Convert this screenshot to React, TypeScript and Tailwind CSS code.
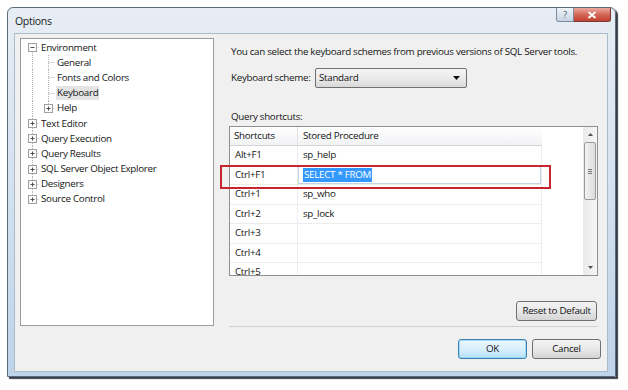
import React from 'react';

type Glyph = 'plus' | 'minus' | 'none';

function Connector({ glyph, top, bottom }: { glyph: Glyph; top: boolean; bottom: boolean }) {
  return (
    <svg width="18" height="15" className="shrink-0">
      <line x1="11.5" y1={top ? 0 : 7.5} x2="11.5" y2={bottom ? 15 : 7.5} stroke="#b4b4b4" strokeDasharray="1 1" />
      <line x1="11.5" y1="7.5" x2="18" y2="7.5" stroke="#b4b4b4" strokeDasharray="1 1" />
      {glyph !== 'none' && (
        <g>
          <rect x="7.5" y="3.5" width="8" height="8" fill="#fbfbfb" stroke="#a0a0a0" />
          <line x1="9.5" y1="7.5" x2="13.5" y2="7.5" stroke="#505050" />
          {glyph === 'plus' && <line x1="11.5" y1="5.5" x2="11.5" y2="9.5" stroke="#505050" />}
        </g>
      )}
    </svg>
  );
}

function Pass() {
  return (
    <svg width="16" height="15" className="shrink-0">
      <line x1="11.5" y1="0" x2="11.5" y2="15" stroke="#b4b4b4" strokeDasharray="1 1" />
    </svg>
  );
}

const tree = [
  { label: 'Environment', level: 0, glyph: 'minus' as Glyph, top: false, bottom: true },
  { label: 'General', level: 1, glyph: 'none' as Glyph, top: true, bottom: true },
  { label: 'Fonts and Colors', level: 1, glyph: 'none' as Glyph, top: true, bottom: true },
  { label: 'Keyboard', level: 1, glyph: 'none' as Glyph, top: true, bottom: true, selected: true },
  { label: 'Help', level: 1, glyph: 'plus' as Glyph, top: true, bottom: false },
  { label: 'Text Editor', level: 0, glyph: 'plus' as Glyph, top: true, bottom: true },
  { label: 'Query Execution', level: 0, glyph: 'plus' as Glyph, top: true, bottom: true },
  { label: 'Query Results', level: 0, glyph: 'plus' as Glyph, top: true, bottom: true },
  { label: 'SQL Server Object Explorer', level: 0, glyph: 'plus' as Glyph, top: true, bottom: true },
  { label: 'Designers', level: 0, glyph: 'plus' as Glyph, top: true, bottom: true },
  { label: 'Source Control', level: 0, glyph: 'plus' as Glyph, top: true, bottom: false },
];

const shortcuts = [
  { key: 'Alt+F1', proc: 'sp_help' },
  { key: 'Ctrl+F1', proc: 'SELECT * FROM', editing: true },
  { key: 'Ctrl+1', proc: 'sp_who' },
  { key: 'Ctrl+2', proc: 'sp_lock' },
  { key: 'Ctrl+3', proc: '' },
  { key: 'Ctrl+4', proc: '' },
  { key: 'Ctrl+5', proc: '' },
];

const vistaButton =
  'h-[20px] rounded-[3px] border border-[#707070] bg-gradient-to-b from-[#f3f3f3] via-[#e8e8e8] to-[#d4d4d4] flex items-center justify-center text-[#111]';

export default function App() {
  return (
    <div className="relative w-[628px] h-[390px] bg-white pt-[7px] pl-[7px] font-['Open_Sans',sans-serif] text-[9.8px] leading-[14px] text-[#151515] tracking-[-0.3px]">
      <div className="w-[609px] h-[370px] rounded-t-[6px] border border-[#5d6b7b] bg-gradient-to-b from-[#e7edf4] via-[#d3e1ef] to-[#bed4ea] flex flex-col shadow-[2px_2px_1px_rgba(20,30,40,0.85)]">
        {/* title bar */}
        <div className="h-[25px] flex items-start shrink-0">
          <span className="pl-[7px] pt-[6px] text-[10.5px] text-[#1b1b1b]">Options</span>
          <div className="ml-auto mr-[4px] flex">
            <div className="w-[18px] h-[14px] rounded-bl-[3px] border border-t-0 border-[#7b8b9c] bg-gradient-to-b from-[#eef3f8] to-[#c9d6e3] flex items-center justify-center text-[9px] leading-none text-[#4a5a6a]">
              ?
            </div>
            <div className="w-[37px] h-[14px] rounded-br-[3px] border border-t-0 border-l-0 border-[#7a3a35] bg-gradient-to-b from-[#e9a89c] via-[#d4685a] to-[#c2402f] flex items-center justify-center">
              <svg width="10" height="8" viewBox="0 0 10 8">
                <path d="M1.5 1 L8.5 7 M8.5 1 L1.5 7" stroke="#ffffff" strokeWidth="1.8" />
              </svg>
            </div>
          </div>
        </div>

        {/* client area */}
        <div className="ml-[6px] mr-[7px] mb-[4px] flex-1 bg-[#f0f0f0] border border-[#a9bacb] flex flex-col">
          <div className="flex pt-[4px] pl-[5px]">
            {/* tree */}
            <div className="w-[194px] h-[288px] bg-white border border-[#9b9b9b] pt-[1px]">
              {tree.map((t, i) => (
                <div key={i} className="flex items-center h-[15.2px]">
                  {t.level === 1 && <Pass />}
                  <Connector glyph={t.glyph} top={t.top} bottom={t.bottom} />
                  <span className={`ml-[1px] px-[1px] leading-[14px] whitespace-nowrap ${t.selected ? 'bg-[#e4e4e4]' : ''}`}>
                    {t.label}
                  </span>
                </div>
              ))}
            </div>

            {/* right pane */}
            <div className="ml-[15px] w-[369px] flex flex-col">
              <div className="pt-[7px] pl-[2px] h-[21px] whitespace-nowrap">
                You can select the keyboard schemes from previous versions of SQL Server tools.
              </div>
              <div className="mt-[9px] flex items-center h-[20px]">
                <span className="pl-[2px] w-[86px]">Keyboard scheme:</span>
                <div className="w-[152px] h-[20px] rounded-[2px] border border-[#707070] bg-gradient-to-b from-[#f4f4f4] via-[#ebebeb] to-[#d9d9d9] flex items-center pl-[3px] pr-[6px]">
                  <span>Standard</span>
                  <svg width="7" height="4" className="ml-auto">
                    <path d="M0 0 H7 L3.5 4 Z" fill="#111" />
                  </svg>
                </div>
              </div>
              <div className="mt-[22px] pl-[2px] h-[14px]">Query shortcuts:</div>

              {/* shortcuts grid */}
              <div className="mt-[2px] h-[150px] border border-[#8f8f8f] bg-white flex overflow-hidden">
                <div className="w-[353px]">
                  <div className="w-[312px] h-[19px] flex border-b border-[#d5d5d5] bg-gradient-to-b from-[#ffffff] to-[#f1f2f4]">
                    <div className="w-[68px] pl-[4px] flex items-center border-r border-[#e2e3e5]">Shortcuts</div>
                    <div className="flex-1 pl-[5px] flex items-center">Stored Procedure</div>
                  </div>
                  {shortcuts.map((s, i) => (
                    <div key={i} className="w-[312px] h-[19.5px] flex border-b border-r border-[#ececec]">
                      <div className="w-[68px] pl-[5px] flex items-center border-r border-[#ececec]">{s.key}</div>
                      <div className={`flex-1 pl-[4px] flex items-center ${s.editing ? 'border border-[#c5d5e6]' : ''}`}>
                        {s.editing ? (
                          <span className="bg-[#3399ff] text-white px-[1px]">{s.proc}</span>
                        ) : (
                          <span className="pl-[1px]">{s.proc}</span>
                        )}
                      </div>
                    </div>
                  ))}
                </div>

                {/* scrollbar */}
                <div className="w-[14px] ml-auto bg-gradient-to-r from-[#eaeaea] to-[#f6f6f6] flex flex-col items-center">
                  <div className="h-[15px] flex items-center justify-center">
                    <svg width="5" height="3">
                      <path d="M0 3 L2.5 0 L5 3 Z" fill="#505050" />
                    </svg>
                  </div>
                  <div className="w-[12px] h-[58px] rounded-[2px] border border-[#9a9a9a] bg-gradient-to-r from-[#f3f3f3] to-[#dcdcdc] flex flex-col items-center justify-center gap-[1px]">
                    <div className="w-[4px] h-px bg-[#777]" />
                    <div className="w-[4px] h-px bg-[#777]" />
                    <div className="w-[4px] h-px bg-[#777]" />
                  </div>
                  <div className="mt-auto h-[15px] flex items-center justify-center">
                    <svg width="5" height="3">
                      <path d="M0 0 L2.5 3 L5 0 Z" fill="#505050" />
                    </svg>
                  </div>
                </div>
              </div>

              <div className="mt-[25px] flex justify-end pr-[1px]">
                <div className={`${vistaButton} w-[81px] h-[19px]`}>Reset to Default</div>
              </div>
              <div className="mt-[5px] border-t border-[#d0d0d0]" />
            </div>
          </div>

          {/* dialog buttons */}
          <div className="mt-[12px] flex justify-end gap-[5px] pr-[6px]">
            <div className="w-[69px] h-[20px] rounded-[3px] border border-[#3c7fb1] bg-gradient-to-b from-[#eaf6fd] via-[#d9f0fc] to-[#b7e0f8] flex items-center justify-center shadow-[inset_0_0_0_1px_rgba(140,210,245,0.7)]">
              OK
            </div>
            <div className={`${vistaButton} w-[69px]`}>Cancel</div>
          </div>
        </div>
      </div>

      {/* red annotation box */}
      <div className="absolute left-[220px] top-[165px] w-[331px] h-[24px] border-2 border-[#c8262f]" />
    </div>
  );
}
